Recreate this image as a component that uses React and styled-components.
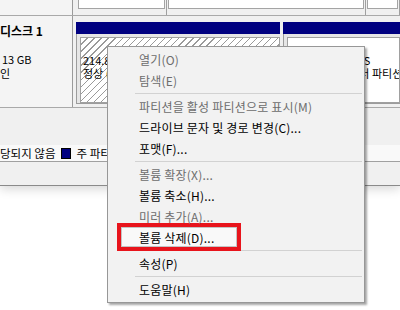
import React from 'react';
import styled, { createGlobalStyle, css } from 'styled-components';

const Global = createGlobalStyle`
  *, *::before, *::after { box-sizing: border-box; }
  html, body { margin: 0; padding: 0; background: #ffffff; }
  body {
    font-family: "Noto Sans CJK KR", "Noto Sans", sans-serif;
    font-size: 11px;
    color: #000;
  }
`;

const Screen = styled.div`
  position: relative;
  width: 400px;
  height: 310px;
  overflow: hidden;
  background: #ffffff;
`;

const Window = styled.div`
  display: flex;
  flex-direction: column;
  height: 186px;
  background: #f0f0f0;
  border-bottom: 1px solid #8a8a8a;
  box-shadow: 0 3px 10px rgba(0, 0, 0, 0.16);
`;

const DiskPane = styled.div`
  display: flex;
  flex-direction: column;
  height: 108px;
  flex-shrink: 0;
`;

const DiskRow = styled.div`
  display: flex;
  height: ${(p) => p.$h}px;
  border-bottom: 1px solid #a9a9a9;
  flex-shrink: 0;
`;

const DiskLabel = styled.div`
  width: 73px;
  flex-shrink: 0;
  background: #f4f4f4;
  border-right: 1px solid #9a9a9a;
  padding-top: ${(p) => p.$pt || 0}px;
  line-height: 14px;
  overflow: hidden;
  white-space: nowrap;
`;

const DiskName = styled.div`
  font-weight: 700;
  font-size: 12px;
  height: 14px;
`;

const LabelLine = styled.div`
  height: 14px;
  padding-left: ${(p) => p.$indent || 0}px;
`;

const TopArea = styled.div`
  flex: 1;
  display: flex;
  padding-left: 4px;
  overflow: hidden;
`;

const TopPart = styled.div`
  display: flex;
  width: ${(p) => (p.$w ? `${p.$w}px` : 'auto')};
  flex: ${(p) => (p.$w ? '0 0 auto' : '1')};
  padding: 0 1px;
  border-right: 1px solid #a0a0a0;
`;

const TopBox = styled.div`
  flex: 1;
  height: 9px;
  background: #ffffff;
  border: 1px solid #a4a4a4;
  border-top: none;
`;

const PartArea = styled.div`
  flex: 1;
  display: flex;
  gap: 3px;
  padding: 6px 0 3px 3px;
  overflow: hidden;
`;

const Partition = styled.div`
  display: flex;
  flex-direction: column;
  width: ${(p) => (p.$w ? `${p.$w}px` : 'auto')};
  flex: ${(p) => (p.$w ? '0 0 auto' : '1')};
  min-width: 0;
`;

const PrimaryBar = styled.div`
  height: 12px;
  background: #000080;
  flex-shrink: 0;
`;

const PartBody = styled.div`
  flex: 1;
  display: flex;
  padding: 3px 0 0 3px;
  background: #e6e6e6;
  border-left: 1px solid #9c9c9c;
  border-bottom: 1px solid #9c9c9c;
`;

const hatch = css`
  background-color: #ffffff;
  background-image: repeating-linear-gradient(
    135deg,
    #ffffff 0px,
    #ffffff 4px,
    #9a9a9a 4px,
    #9a9a9a 5px
  );
`;

const PartInner = styled.div`
  flex: 1;
  min-width: 0;
  border: 1px solid #a0a0a0;
  padding: 16px 0 0 2px;
  line-height: 13px;
  white-space: nowrap;
  overflow: hidden;
  ${(p) => (p.$selected ? hatch : 'background: #ffffff;')}
`;

const PartText = styled.div`
  height: 13px;
`;

const EmptySpace = styled.div`
  height: 37px;
  flex-shrink: 0;
`;

const Legend = styled.div`
  display: flex;
  align-items: center;
  height: 17px;
  background: #f9f9f9;
  border-bottom: 1px solid #a0a0a0;
  white-space: nowrap;
  overflow: hidden;
  flex-shrink: 0;
  font-size: 11.5px;
`;

const LegendText = styled.span`
  margin-right: 6px;
`;

const Swatch = styled.span`
  display: inline-block;
  width: 10px;
  height: 11px;
  background: ${(p) => p.$color};
  border: 1px solid #000;
  margin-right: 5px;
`;

const StatusBar = styled.div`
  flex: 1;
  background: #f0f0f0;
`;

const Menu = styled.div`
  position: absolute;
  left: 107px;
  top: 46px;
  width: 258px;
  padding: 2px;
  background: #f2f2f2;
  border: 1px solid #979797;
  box-shadow: 2px 2px 2px rgba(0, 0, 0, 0.35);
  font-size: 12px;
  letter-spacing: 0.2px;
`;

const MenuItem = styled.div`
  position: relative;
  display: flex;
  align-items: center;
  height: 21px;
  padding-left: 29px;
  color: ${(p) => (p.$disabled ? '#6d6d6d' : '#000000')};
  white-space: nowrap;
`;

const ItemLabel = styled.span`
  position: relative;
  z-index: 1;
`;

const Separator = styled.div`
  height: 5px;
  margin-left: 25px;
  display: flex;
  align-items: center;
  &::after {
    content: '';
    flex: 1;
    height: 1px;
    background: #d2d2d2;
  }
`;

const Callout = styled.div`
  position: absolute;
  left: 7px;
  top: -4px;
  width: 124px;
  height: 28px;
  border: 4px solid #e8141c;
  background: rgba(255, 255, 255, 0.55);
  box-shadow: inset 0 0 0 1px #c4c4c4;
  z-index: 0;
`;

const menuItems = [
  { t: '열기(O)', d: true },
  { t: '탐색(E)', d: true },
  { sep: true },
  { t: '파티션을 활성 파티션으로 표시(M)', d: true },
  { t: '드라이브 문자 및 경로 변경(C)...' },
  { t: '포맷(F)...' },
  { sep: true },
  { t: '볼륨 확장(X)...', d: true },
  { t: '볼륨 축소(H)...' },
  { t: '미러 추가(A)...', d: true },
  { t: '볼륨 삭제(D)...', mark: true },
  { sep: true },
  { t: '속성(P)' },
  { sep: true },
  { t: '도움말(H)' },
];

export default function App() {
  return (
    <Screen>
      <Global />
      <Window>
        <DiskPane>
          <DiskRow $h={16}>
            <DiskLabel />
            <TopArea>
              <TopPart $w={90}>
                <TopBox />
              </TopPart>
              <TopPart $w={199}>
                <TopBox />
              </TopPart>
              <TopPart>
                <TopBox />
              </TopPart>
            </TopArea>
          </DiskRow>
          <DiskRow $h={92}>
            <DiskLabel $pt={8}>
              <DiskName>디스크 1</DiskName>
              <LabelLine />
              <LabelLine $indent={2}>13 GB</LabelLine>
              <LabelLine>인</LabelLine>
            </DiskLabel>
            <PartArea>
              <Partition $w={204}>
                <PrimaryBar />
                <PartBody>
                  <PartInner $selected>
                    <PartText>214.84 GB NTFS</PartText>
                    <PartText>정상 (부팅, 페이지 파일, 주 파티션)</PartText>
                  </PartInner>
                </PartBody>
              </Partition>
              <Partition>
                <PrimaryBar />
                <PartBody>
                  <PartInner>
                    <PartText>250.29 GB NTFS</PartText>
                    <PartText>정상 (기본 데이터 파티션)</PartText>
                  </PartInner>
                </PartBody>
              </Partition>
            </PartArea>
          </DiskRow>
        </DiskPane>
        <EmptySpace />
        <Legend>
          <LegendText>당되지 않음</LegendText>
          <Swatch $color="#000080" />
          <LegendText>주 파티션</LegendText>
        </Legend>
        <StatusBar />
      </Window>
      <Menu>
        {menuItems.map((it, i) =>
          it.sep ? (
            <Separator key={i} />
          ) : (
            <MenuItem key={i} $disabled={it.d}>
              {it.mark && <Callout />}
              <ItemLabel>{it.t}</ItemLabel>
            </MenuItem>
          )
        )}
      </Menu>
    </Screen>
  );
}
